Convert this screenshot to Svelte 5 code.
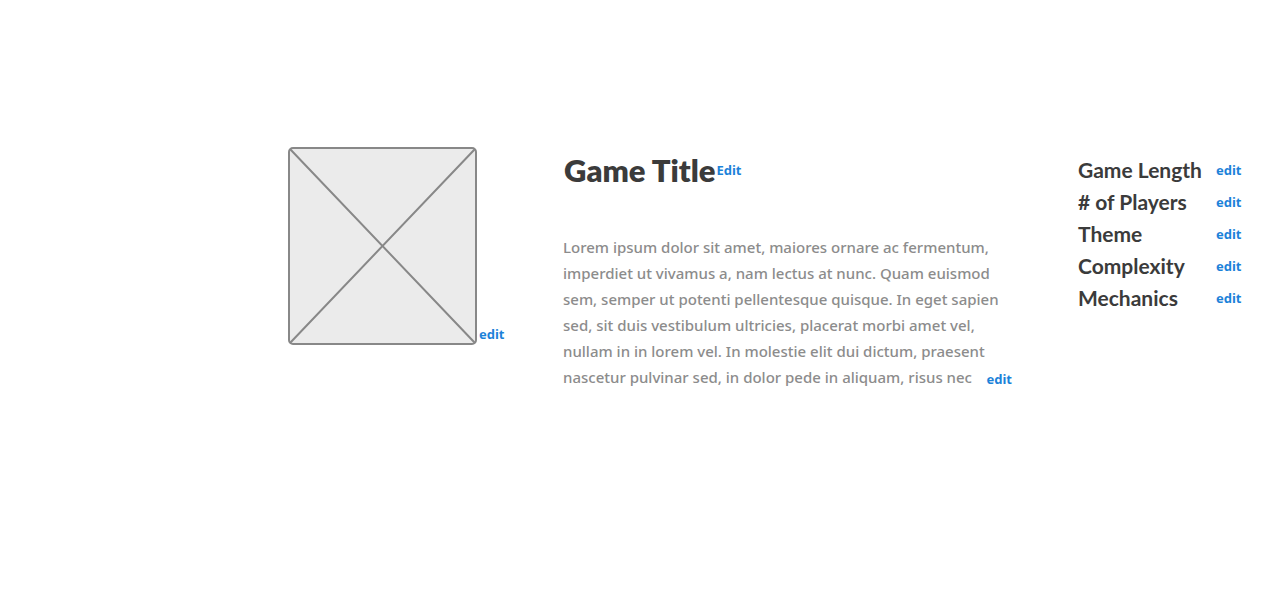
<script>
  const lines = [
    'Lorem ipsum dolor sit amet, maiores ornare ac fermentum,',
    'imperdiet ut vivamus a, nam lectus at nunc. Quam euismod',
    'sem, semper ut potenti pellentesque quisque. In eget sapien',
    'sed, sit duis vestibulum ultricies, placerat morbi amet vel,',
    'nullam in in lorem vel. In molestie elit dui dictum, praesent',
    'nascetur pulvinar sed, in dolor pede in aliquam, risus nec'
  ];
  const details = ['Game Length', '# of Players', 'Theme', 'Complexity', 'Mechanics'];
</script>

<main>
  <section class="cover">
    <svg viewBox="0 0 189 198" role="img" aria-label="Game cover">
      <rect x="1" y="1" width="187" height="196" rx="4" />
      <path d="M2 2 187 196M187 2 2 196" />
    </svg>
    <a href="#cover" aria-label="edit cover">edit</a>
  </section>

  <section class="about">
    <header>
      <h1>Game Title</h1>
      <a href="#title">Edit</a>
    </header>
    <div class="description">
      <p>
        {#each lines as line}
          <span>{line}</span>
        {/each}
      </p>
      <a href="#description">edit</a>
    </div>
  </section>

  <ul>
    {#each details as detail}
      <li>
        <h2>{detail}</h2>
        <a href="#details" aria-label={`edit ${detail}`}>edit</a>
      </li>
    {/each}
  </ul>
</main>

<style>
  :global(body) {
    margin: 0;
    background: #fff;
    font-family: Lato, "Noto Sans", sans-serif;
    font-variant-ligatures: none;
  }
  main {
    display: grid;
    grid-template-columns: auto minmax(0, 1fr) 164px;
    align-items: start;
    padding: 147px 20px 40px 288px;
  }
  h1, h2, p, ul {
    margin: 0;
    padding: 0;
  }
  a {
    color: #1c82d9;
    font-family: "Noto Sans", sans-serif;
    font-size: 13px;
    font-weight: 700;
    line-height: 22px;
    text-decoration: none;
  }
  .cover {
    display: flex;
    align-items: flex-end;
    gap: 2px;
    margin-right: 58px;
  }
  .cover a {
    width: 26px;
  }
  svg {
    width: 189px;
    height: 198px;
  }
  rect {
    fill: #ebebeb;
    stroke: #888;
    stroke-width: 2;
  }
  path {
    fill: none;
    stroke: #888;
    stroke-width: 2;
  }
  .about {
    margin-right: 66px;
  }
  header {
    display: flex;
    align-items: center;
    gap: 1px;
    height: 46px;
    padding-left: 1px;
  }
  h1 {
    color: #3b3b3b;
    font-size: 31px;
    font-weight: 800;
    line-height: 46px;
  }
  .description {
    display: flex;
    align-items: flex-end;
    justify-content: space-between;
    margin-top: 41px;
  }
  p {
    width: 0;
    flex: 1;
    color: #8c8c8c;
    font-family: "Noto Sans", sans-serif;
    font-size: 15px;
    font-weight: 500;
    line-height: 26px;
    white-space: nowrap;
  }
  p span {
    display: block;
  }
  ul {
    list-style: none;
    padding-top: 7px;
  }
  li {
    display: flex;
    align-items: center;
    justify-content: space-between;
    height: 32px;
  }
  li a {
    width: 26px;
  }
  h2 {
    color: #3b3b3b;
    font-size: 21px;
    font-weight: 700;
    line-height: 32px;
  }
</style>
